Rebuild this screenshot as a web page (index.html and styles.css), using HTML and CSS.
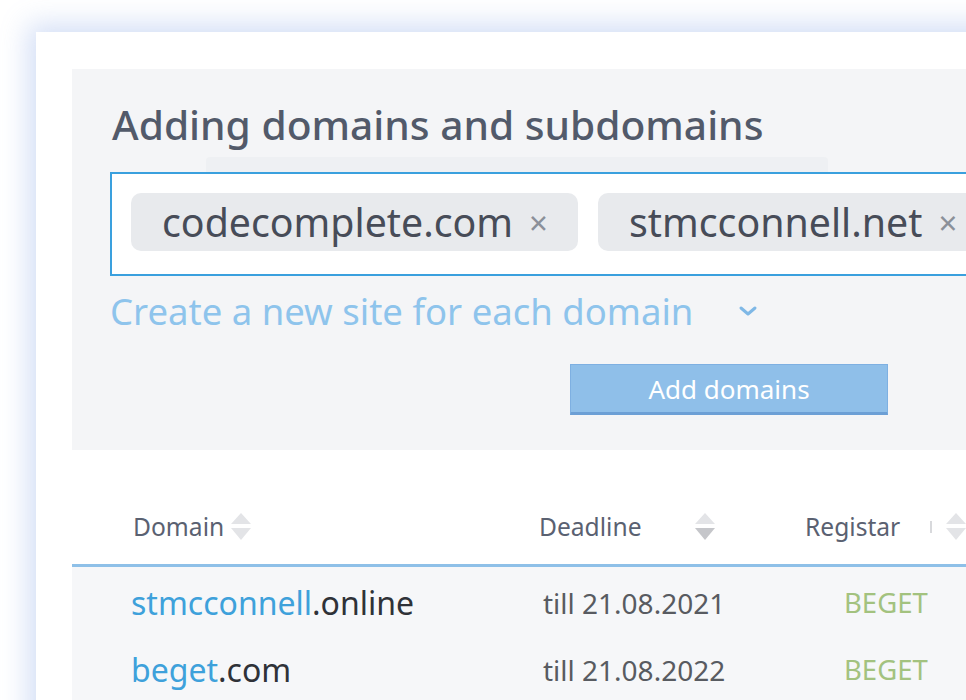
FILE: index.html
```html
<!DOCTYPE html>
<html lang="en">
<head>
    <meta charset="UTF-8">
    <meta name="viewport" content="width=device-width, initial-scale=1.0">
    <title>Adding domains and subdomains</title>
    <link rel="stylesheet" href="styles.css">
</head>
<body>

    <div class="stage">
        <div class="card">

            <!-- Form for adding domains -->
            <section class="add-panel">
                <h1>Adding domains and subdomains</h1>

                <div class="tag-input">
                    <span class="tag">codecomplete.com <span class="tag-close">×</span></span>
                    <span class="tag">stmcconnell.net <span class="tag-close">×</span></span>
                </div>

                <div class="site-select">
                    <span>Create a new site for each domain</span>
                    <svg class="chevron" width="20" height="12" viewBox="0 0 20 12">
                        <path d="M3 3 L10 9 L17 3" fill="none" stroke="#7fb8e6" stroke-width="3" stroke-linecap="round" stroke-linejoin="round"/>
                    </svg>
                </div>

                <div class="actions">
                    <button class="add-btn">Add domains</button>
                </div>
            </section>

            <!-- Domain list -->
            <section class="domain-table">
                <div class="table-head">
                    <div class="th th-domain">
                        Domain
                        <svg class="sort" width="22" height="32" viewBox="0 0 22 32">
                            <path d="M11 2 L21 13 L1 13 Z" fill="#e3e4e7"/>
                            <path d="M1 17 L21 17 L11 29 Z" fill="#e3e4e7"/>
                        </svg>
                    </div>
                    <div class="th th-deadline">
                        Deadline
                        <svg class="sort" width="22" height="32" viewBox="0 0 22 32">
                            <path d="M11 2 L21 13 L1 13 Z" fill="#e3e4e7"/>
                            <path d="M1 17 L21 17 L11 29 Z" fill="#c5c6ca"/>
                        </svg>
                    </div>
                    <div class="th th-registar">
                        Registar
                        <span class="th-divider"></span>
                        <svg class="sort" width="22" height="32" viewBox="0 0 22 32">
                            <path d="M11 2 L21 13 L1 13 Z" fill="#e3e4e7"/>
                            <path d="M1 17 L21 17 L11 29 Z" fill="#e3e4e7"/>
                        </svg>
                    </div>
                </div>

                <div class="table-body">
                    <div class="row">
                        <div class="td td-domain"><span class="name">stmcconnell</span>.online</div>
                        <div class="td td-date">till 21.08.2021</div>
                        <div class="td td-reg">BEGET</div>
                    </div>
                    <div class="row">
                        <div class="td td-domain"><span class="name">beget</span>.com</div>
                        <div class="td td-date">till 21.08.2022</div>
                        <div class="td td-reg">BEGET</div>
                    </div>
                </div>
            </section>

        </div>
    </div>

</body>
</html>
```

FILE: styles.css
```css
body {
    margin: 0;
    background-color: #ffffff;
    font-family: 'Noto Sans', 'Open Sans', sans-serif;
    overflow: hidden;
}

.stage {
    padding: 32px 0 0 36px;
}

.card {
    width: 1000px;
    height: 720px;
    background-color: #ffffff;
    padding: 37px 0 0 36px;
    box-sizing: border-box;
    box-shadow: 0 0 26px 8px rgba(120, 155, 228, 0.32);
}

/* --- Add domains form --- */
.add-panel {
    background-color: #f4f5f7;
    height: 381px;
    padding: 27px 0 0 38px;
    box-sizing: border-box;
}

h1 {
    margin: 0 0 0 2px;
    font-size: 40.7px;
    font-weight: 500;
    line-height: 56px;
    color: #525a6a;
}

.tag-input {
    position: relative;
    display: flex;
    gap: 20px;
    width: 1000px;
    margin-top: 20px;
    padding: 19px 0 23px 19px;
    background-color: #ffffff;
    border: 2px solid #3aa0de;
}

/* faint card edge peeking out above the input */
.tag-input::before {
    content: '';
    position: absolute;
    left: 94px;
    top: -17px;
    width: 622px;
    height: 15px;
    background-color: #eef0f3;
    border-radius: 4px 4px 0 0;
}

.tag {
    display: flex;
    align-items: center;
    height: 58px;
    padding: 0 30px 0 31px;
    border-radius: 10px;
    background-color: #e8eaed;
    color: #474c58;
    font-size: 39.3px;
    white-space: nowrap;
}

.tag-close {
    margin-left: 16px;
    color: #8b9099;
    font-size: 33px;
}

.site-select {
    display: flex;
    align-items: center;
    gap: 45px;
    margin-top: 10px;
    color: #8ec4ec;
    font-size: 36.5px;
}

.actions {
    margin-top: 28px;
    padding-left: 460px;
}

.add-btn {
    width: 318px;
    height: 51px;
    padding-top: 2px;
    background-color: #8fbfe9;
    color: #ffffff;
    border: 1px solid #7eb0e2;
    border-bottom: 3px solid #6c9fd5;
    font-family: 'Noto Sans', 'Open Sans', sans-serif;
    font-size: 26px;
    cursor: pointer;
}

/* --- Domain table --- */
.domain-table {
    width: 1000px;
}

.table-head,
.row {
    display: grid;
    grid-template-columns: 406px 266px auto;
    padding-left: 61px;
}

.table-head {
    height: 117px;
    align-items: end;
    padding-bottom: 21px;
    box-sizing: border-box;
    border-bottom: 3px solid #8ec0e8;
}

.th {
    display: flex;
    align-items: center;
    color: #5a6171;
    font-size: 24.6px;
}

.th-domain .sort {
    margin-left: 6px;
}

.th-deadline .sort {
    margin-left: 52px;
}

.th-divider {
    width: 2px;
    height: 12px;
    margin-left: 30px;
    background-color: #d8d9dc;
}

.th-registar .sort {
    margin-left: 13px;
}

.table-body {
    padding-top: 2px;
    background-color: #f6f7f9;
}

.row {
    height: 67px;
    align-items: center;
}

.td-domain {
    margin-left: -2px;
    color: #2f3238;
    font-size: 32px;
}

.name {
    color: #3ea1db;
}

.td-date {
    padding-left: 4px;
    color: #585b61;
    font-size: 28px;
}

.td-reg {
    padding-left: 39px;
    color: #a3c27f;
    font-size: 27.5px;
}
```
